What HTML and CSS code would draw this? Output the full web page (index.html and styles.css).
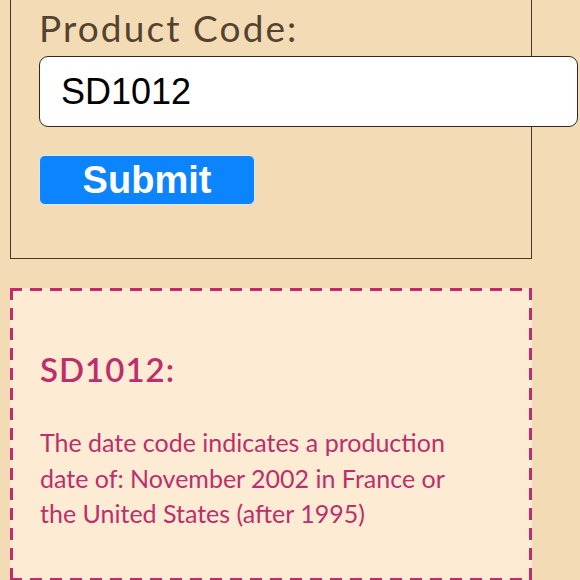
FILE: index.html
```html
<!DOCTYPE html>
<html lang="en">
<head>
<meta charset="utf-8">
<title>Date Code Lookup</title>
<link rel="stylesheet" href="styles.css">
</head>
<body>
<form class="lookup">
  <label class="lookup-label" for="code">Product Code:</label>
  <input class="lookup-input" id="code" type="text" value="SD1012">
  <button class="lookup-submit" type="button">Submit</button>
</form>
<section class="result">
  <h2 class="result-title">SD1012:</h2>
  <p class="result-text">The date code indicates a production date of: November 2002 in France or the United States (after 1995)</p>
</section>
</body>
</html>
```
FILE: styles.css
```css
html, body {
  margin: 0;
  background: #f3dcb5;
}
body {
  padding: 0 48px 0 10px;
  font-family: "Lato", "Noto Sans", sans-serif;
}
.lookup {
  display: block;
  margin-top: -20px;
  padding: 20px 0 53px 28px;
  border: 1.5px solid #45372a;
  border-top: none;
}
.lookup-label {
  display: block;
  font-size: 37px;
  letter-spacing: 2.1px;
  line-height: 56px;
  color: #54432f;
}
.lookup-input {
  display: block;
  box-sizing: border-box;
  width: 539px;
  max-width: none;
  height: 71px;
  margin: 0;
  padding: 0 0 0 21px;
  border: 1.5px solid #2f2a25;
  border-radius: 9px;
  background: #fff;
  font-family: "Liberation Sans", Arial, sans-serif;
  font-size: 36px;
  color: #000;
  outline: none;
}
.lookup-submit {
  display: block;
  box-sizing: border-box;
  width: 216px;
  height: 50px;
  margin-top: 28px;
  padding: 0;
  border: 1px solid #d6e6f5;
  border-radius: 6px;
  background: #0b84fe;
  color: #fff;
  font-family: "Liberation Sans", Arial, sans-serif;
  font-weight: bold;
  font-size: 38px;
  line-height: 48px;
}
.result {
  box-sizing: border-box;
  height: 293px;
  margin-top: 29px;
  padding: 61px 60px 0 30px;
  background:
    repeating-linear-gradient(90deg, #c52a6c 0 12px, transparent 12px 20px) left top / 100% 3px no-repeat,
    repeating-linear-gradient(90deg, #c52a6c 0 12px, transparent 12px 20px) left bottom / 100% 3px no-repeat,
    repeating-linear-gradient(180deg, #c52a6c 0 12px, transparent 12px 20px) left top / 3px 100% no-repeat,
    repeating-linear-gradient(180deg, #c52a6c 0 12px, transparent 12px 20px) right top / 3px 100% no-repeat,
    #fdebd4;
  color: #bd2f6c;
}
.result-title {
  margin: 0;
  font-size: 33px;
  font-weight: 600;
  letter-spacing: 1px;
  line-height: 40px;
}
.result-text {
  margin: 36px 0 0;
  font-size: 25px;
  line-height: 35.5px;
}
```
